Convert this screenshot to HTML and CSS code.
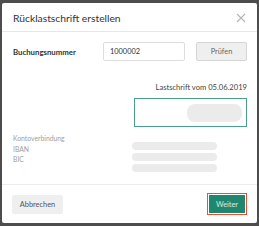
FILE: index.html
```html
<!DOCTYPE html>
<html lang="de">
<head>
<meta charset="utf-8">
<link rel="stylesheet" href="styles.css">
</head>
<body>
<div class="dialog">
  <div class="header">
    <div class="title">Rücklastschrift erstellen</div>
    <svg class="close" width="10" height="10" viewBox="0 0 10 10"><path d="M1 1L9 9M9 1L1 9" stroke="#b5b5b5" stroke-width="1.1" fill="none"/></svg>
  </div>
  <div class="body">
    <div class="row">
      <div class="label">Buchungsnummer</div>
      <div class="input">1000002</div>
      <div class="btn-gray check">Prüfen</div>
    </div>
    <div class="date">Lastschrift vom 05.06.2019</div>
    <div class="box"><div class="pill"></div></div>
    <div class="account">
      <div class="labels">
        <div>Kontoverbindung</div>
        <div>IBAN</div>
        <div>BIC</div>
      </div>
      <div class="bars">
        <div class="bar"></div>
        <div class="bar"></div>
        <div class="bar"></div>
      </div>
    </div>
  </div>
  <div class="footer">
    <div class="btn-gray cancel">Abbrechen</div>
    <div class="next-wrap"><div class="next">Weiter</div></div>
  </div>
</div>
</body>
</html>
```

FILE: styles.css
```css
html, body { margin: 0; padding: 0; }
body {
  background: #4d4d4d;
  width: 259px;
  height: 226px;
  overflow: hidden;
  font-family: Lato, "Open Sans", sans-serif;
}
.dialog {
  margin: 3px 0 0 2px;
  width: 255px;
  height: 220px;
  background: #fff;
  border-radius: 2px;
  display: flex;
  flex-direction: column;
}
.header {
  height: 28px;
  border-bottom: 1px solid #e8e8e8;
  display: flex;
  align-items: center;
  justify-content: space-between;
  padding: 0 11px 0 11px;
}
.title {
  font-size: 10.3px;
  color: #333;
  margin-top: 1px;
}
.close { margin-top: 2px; }
.body {
  flex: 1;
  padding: 10px 10px 0 10px;
}
.row {
  display: flex;
  align-items: center;
  height: 19px;
}
.label {
  font-size: 7.8px;
  font-weight: 700;
  color: #333;
  width: 91px;
  padding-left: 1px;
  box-sizing: border-box;
}
.input {
  width: 74px;
  height: 17px;
  border: 1px solid #ddd;
  border-radius: 2px;
  font-size: 7.4px;
  color: #333;
  line-height: 17px;
  padding-left: 6px;
  margin-right: 11px;
}
.btn-gray {
  background: #efefef;
  border: 1px solid #d5d5d5;
  border-radius: 2px;
  color: #666;
  font-size: 7.4px;
  display: flex;
  align-items: center;
  justify-content: center;
}
.check {
  width: 49px;
  height: 17px;
}
.date {
  text-align: right;
  font-size: 7.6px;
  color: #444;
  margin-top: 20px;
  line-height: 12px;
}
.box {
  margin: 5px 0 0 122px;
  height: 27px;
  border: 1.5px solid #4a9e8e;
  display: flex;
  justify-content: flex-end;
  align-items: center;
  padding-right: 4px;
}
.pill {
  width: 55px;
  height: 18px;
  border-radius: 8px;
  background: #ebebeb;
}
.account {
  display: flex;
  margin-top: 6px;
}
.labels {
  width: 120px;
  font-size: 6.8px;
  color: #a0a0a0;
  line-height: 10.7px;
  padding-left: 1px;
  box-sizing: border-box;
}
.bars {
  padding-top: 9px;
  display: flex;
  flex-direction: column;
  gap: 3px;
}
.bar {
  width: 85px;
  height: 8px;
  border-radius: 4px;
  background: #ebebeb;
}
.footer {
  height: 38px;
  border-top: 1px solid #ececec;
  display: flex;
  align-items: center;
  justify-content: space-between;
  padding: 0 10px 0 10px;
}
.cancel {
  width: 49px;
  height: 17px;
  border-color: #efefef;
  color: #555;
}
.next-wrap {
  border: 1.5px solid #e8503a;
  padding: 1px;
}
.next {
  width: 36px;
  height: 18px;
  background: #1f8770;
  color: #d8ece6;
  font-size: 7.4px;
  display: flex;
  align-items: center;
  justify-content: center;
}
```
